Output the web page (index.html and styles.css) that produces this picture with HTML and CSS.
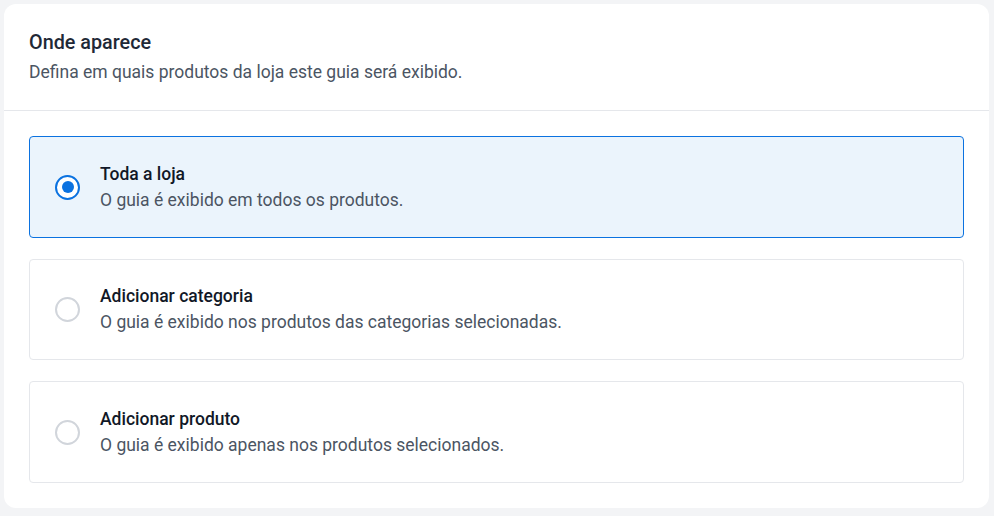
FILE: index.html
```html
<!DOCTYPE html>
<html lang="pt-BR">

<head>
    <meta charset="UTF-8">
    <meta name="viewport" content="width=device-width, initial-scale=1.0">
    <title>Onde aparece</title>
    <link rel="stylesheet" href="styles.css">
</head>

<body>

    <section class="panel">
        <div class="panel-header">
            <h2 class="panel-title">Onde aparece</h2>
            <p class="panel-subtitle">Defina em quais produtos da loja este guia será exibido.</p>
        </div>

        <div class="option-list">
            <label class="option selected">
                <input type="radio" name="scope" value="all" checked>
                <span class="radio"></span>
                <span class="option-text">
                    <span class="option-title">Toda a loja</span>
                    <span class="option-desc">O guia é exibido em todos os produtos.</span>
                </span>
            </label>

            <label class="option">
                <input type="radio" name="scope" value="category">
                <span class="radio"></span>
                <span class="option-text">
                    <span class="option-title">Adicionar categoria</span>
                    <span class="option-desc">O guia é exibido nos produtos das categorias selecionadas.</span>
                </span>
            </label>

            <label class="option">
                <input type="radio" name="scope" value="product">
                <span class="radio"></span>
                <span class="option-text">
                    <span class="option-title">Adicionar produto</span>
                    <span class="option-desc">O guia é exibido apenas nos produtos selecionados.</span>
                </span>
            </label>
        </div>
    </section>

</body>

</html>
```

FILE: styles.css
```css
body {
    margin: 0;
    padding: 4px 5px 8px 4px;
    background-color: #f3f4f6;
    font-family: Roboto, "Liberation Sans", Arial, sans-serif;
    color: #1f2937;
}

.panel {
    background-color: #fff;
    border-radius: 12px;
}

.panel-header {
    padding: 26px 25px 0 25px;
    height: 80px;
    border-bottom: 1px solid #e5e7eb;
}

.panel-title {
    margin: 0;
    font-size: 19.8px;
    font-weight: 500;
    line-height: 26px;
    color: #1f2937;
}

.panel-subtitle {
    margin: 3px 0 0 0;
    font-size: 17.5px;
    line-height: 26px;
    color: #4b5563;
}

.option-list {
    display: flex;
    flex-direction: column;
    gap: 21px;
    padding: 25px;
}

.option {
    display: flex;
    align-items: center;
    gap: 20px;
    padding: 23.5px 25px 24px 25px;
    border: 1px solid #e5e7eb;
    border-radius: 4px;
    cursor: pointer;
}

.option.selected {
    border-color: #0b72e0;
    background-color: #ebf4fc;
}

.option input {
    display: none;
}

.radio {
    flex: none;
    box-sizing: border-box;
    width: 25px;
    height: 25px;
    margin-top: 1px;
    border: 2px solid #d1d5db;
    border-radius: 50%;
    background-color: #fff;
    display: flex;
    align-items: center;
    justify-content: center;
}

.option.selected .radio {
    border: 2.5px solid #0b72e0;
}

.option.selected .radio::after {
    content: "";
    width: 12px;
    height: 12px;
    border-radius: 50%;
    background-color: #0b72e0;
}

.option-text {
    display: flex;
    flex-direction: column;
}

.option-title {
    font-size: 17.5px;
    font-weight: 500;
    line-height: 26px;
    color: #111827;
}

.option-desc {
    font-size: 17.5px;
    line-height: 26px;
    color: #4b5563;
}
```
